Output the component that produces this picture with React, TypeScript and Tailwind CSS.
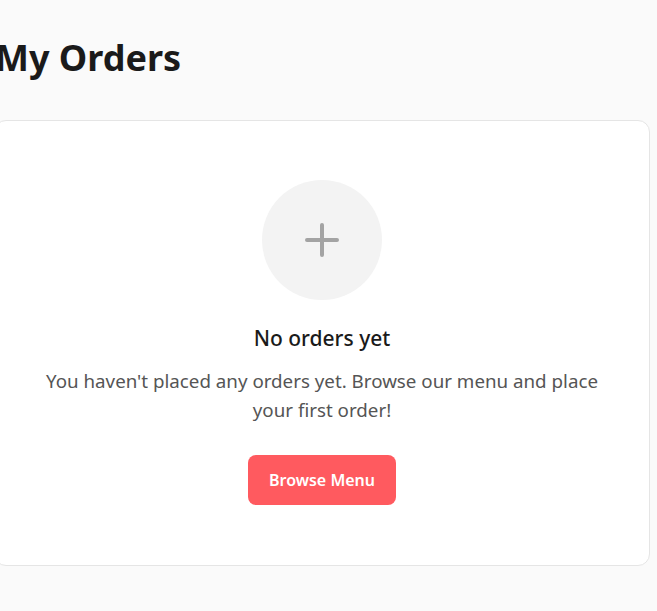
export default function App() {
  return (
    <div
      className="min-h-[611px] w-full overflow-hidden bg-[#fafafa]"
      style={{ fontFamily: '"Noto Sans", "Open Sans", sans-serif' }}
    >
      <div className="-ml-[6px] w-[656px] pt-[36px]">
        <h1 className="pl-[1px] text-[36px] font-bold leading-[1.2] text-[#1a1a1a] mb-[41px]">My Orders</h1>
        <div className="flex flex-col items-center rounded-[12px] border border-[#e5e5e5] bg-white px-8 pt-[59px] pb-[60px] text-center">
          <div className="flex h-[120px] w-[120px] items-center justify-center rounded-full bg-[#f3f3f3] mb-[23px]">
            <svg width="36" height="36" viewBox="0 0 36 36" fill="none" stroke="#a3a3a3" strokeWidth="4" strokeLinecap="round">
              <path d="M18 3v30M3 18h30" />
            </svg>
          </div>
          <h2 className="text-[21px] font-medium leading-[30px] text-[#1a1a1a] mb-[13px]">No orders yet</h2>
          <p className="max-w-[580px] text-[18.75px] leading-[29px] text-[#555555] mb-[31px]">
            You haven't placed any orders yet. Browse our menu and place your first order!
          </p>
          <button className="flex h-[50px] w-[148px] items-center justify-center rounded-[8px] bg-[#ff5a5f] text-[16px] font-semibold text-white">
            Browse Menu
          </button>
        </div>
      </div>
    </div>
  );
}
